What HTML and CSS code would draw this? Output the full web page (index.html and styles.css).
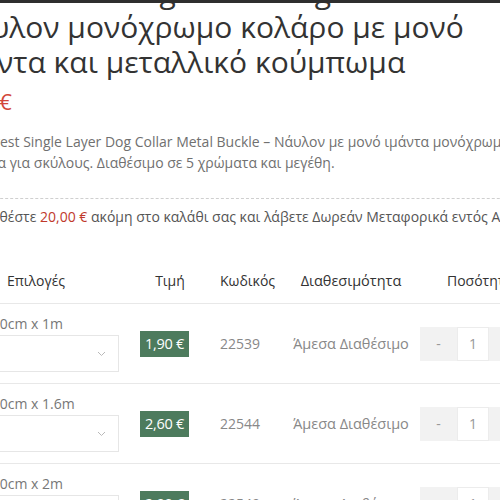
FILE: index.html
```html
<!DOCTYPE html>
<html lang="el">
<head>
<meta charset="utf-8">
<title>Νάυλον μονόχρωμο κολάρο</title>
<link rel="stylesheet" href="styles.css">
</head>
<body>
<header class="topbar"></header>
<main class="product">
  <h1 class="title">Pet Interest Dog Collar Single –<br>Νάυλον μονόχρωμο κολάρο με μονό<br>ιμάντα και μεταλλικό κούμπωμα</h1>
  <p class="price">1,90 €</p>
  <p class="desc">Pet Interest Single Layer Dog Collar Metal Buckle – Νάυλον με μονό ιμάντα μονόχρωμο κολάρο<br>λουράκια για σκύλους. Διαθέσιμο σε 5 χρώματα και μεγέθη.</p>
  <p class="shipping">Προσθέστε <span class="amount">20,00 €</span> ακόμη στο καλάθι σας και λάβετε Δωρεάν Μεταφορικά εντός Αθηνών</p>

  <div class="variants">
    <div class="row head">
      <div class="cell opt">Επιλογές</div>
      <div class="cell cost">Τιμή</div>
      <div class="cell code">Κωδικός</div>
      <div class="cell stock">Διαθεσιμότητα</div>
      <div class="cell qty">Ποσότητα</div>
    </div>

    <div class="row">
      <div class="cell opt">
        <span class="opt-label">1.0cm x 1m</span>
        <div class="select"><svg class="chev" width="9" height="6" viewBox="0 0 9 6"><path d="M1 1l3.5 3.5L8 1" fill="none" stroke="#b9b9b9" stroke-width="1"/></svg></div>
      </div>
      <div class="cell cost"><span class="badge">1,90 €</span></div>
      <div class="cell code">22539</div>
      <div class="cell stock">Άμεσα Διαθέσιμο</div>
      <div class="cell qty"><div class="stepper"><span class="btn">-</span><span class="num">1</span><span class="btn">+</span></div></div>
    </div>

    <div class="row">
      <div class="cell opt">
        <span class="opt-label">1.0cm x 1.6m</span>
        <div class="select"><svg class="chev" width="9" height="6" viewBox="0 0 9 6"><path d="M1 1l3.5 3.5L8 1" fill="none" stroke="#b9b9b9" stroke-width="1"/></svg></div>
      </div>
      <div class="cell cost"><span class="badge">2,60 €</span></div>
      <div class="cell code">22544</div>
      <div class="cell stock">Άμεσα Διαθέσιμο</div>
      <div class="cell qty"><div class="stepper"><span class="btn">-</span><span class="num">1</span><span class="btn">+</span></div></div>
    </div>

    <div class="row">
      <div class="cell opt">
        <span class="opt-label">1.0cm x 2m</span>
        <div class="select"><svg class="chev" width="9" height="6" viewBox="0 0 9 6"><path d="M1 1l3.5 3.5L8 1" fill="none" stroke="#b9b9b9" stroke-width="1"/></svg></div>
      </div>
      <div class="cell cost"><span class="badge">2,90 €</span></div>
      <div class="cell code">22549</div>
      <div class="cell stock">Άμεσα Διαθέσιμο</div>
      <div class="cell qty"><div class="stepper"><span class="btn">-</span><span class="num">1</span><span class="btn">+</span></div></div>
    </div>
  </div>
</main>
</body>
</html>
```

FILE: styles.css
```css
html, body {
  margin: 0;
  padding: 0;
  background: #fff;
  overflow: hidden;
}

body {
  font-family: "Open Sans", "Noto Sans", sans-serif;
  color: #333;
}

.topbar {
  position: fixed;
  top: 0;
  left: 0;
  right: 0;
  height: 3px;
  background: #2e2e2e;
  z-index: 10;
}

.product {
  width: 620px;
  margin: -26px 0 0 -50px;
}

.title {
  margin: 0;
  font-size: 30px;
  line-height: 35px;
  font-weight: 400;
  color: #333;
  white-space: nowrap;
}

.price {
  margin: 7px 0 0;
  font-size: 22px;
  line-height: 30px;
  color: #d2473a;
}

.desc {
  margin: 15px 0 0 -6px;
  font-size: 14px;
  line-height: 21px;
  color: #707070;
  white-space: nowrap;
}

.shipping {
  margin: 25px 0 0;
  padding: 8px 0 0 14px;
  border-top: 1px dashed #cfcfcf;
  font-size: 14px;
  line-height: 20px;
  color: #555;
  white-space: nowrap;
}

.shipping .amount {
  color: #c0392b;
}

.variants {
  margin-top: 31px;
}

.row {
  display: grid;
  grid-template-columns: 172px 96px 72px 122px 1fr;
  align-items: center;
  height: 79px;
  border-bottom: 1px solid #e8e8e8;
  font-size: 14px;
  color: #888;
}

.row.head {
  height: 45px;
  color: #333;
}

.cell.opt {
  text-align: center;
}

.cell.cost {
  padding: 0 18px;
  text-align: center;
}

.cell.code {
  padding-left: 2px;
}

.cell.stock {
  text-align: center;
  font-size: 14.5px;
}

.cell.qty {
  padding-left: 8px;
}

.head .cell.qty {
  padding-left: 35px;
}

.row:not(.head) .cell.opt {
  display: flex;
  flex-direction: column;
  align-items: flex-start;
  gap: 3px;
  padding-left: 30px;
  text-align: left;
}

.row:not(.head) .cell.cost {
  text-align: left;
}

.opt-label {
  padding-left: 8px;
  line-height: 17px;
  color: #777;
}

.select {
  box-sizing: border-box;
  width: 139px;
  height: 37px;
  border: 1px solid #e6e6e6;
  display: flex;
  align-items: center;
  justify-content: flex-end;
  padding-right: 12px;
}

.badge {
  display: inline-block;
  padding: 4px 5px;
  background: #4d7b5d;
  color: #fff;
  font-size: 14.5px;
  line-height: 18px;
  letter-spacing: -0.3px;
}

.stepper {
  display: flex;
  height: 34px;
}

.stepper .btn {
  width: 37px;
  background: #f2f2f2;
  display: flex;
  align-items: center;
  justify-content: center;
  color: #999;
}

.stepper .num {
  box-sizing: border-box;
  width: 32px;
  border: 1px solid #ececec;
  display: flex;
  align-items: center;
  justify-content: center;
  color: #999;
}
```
